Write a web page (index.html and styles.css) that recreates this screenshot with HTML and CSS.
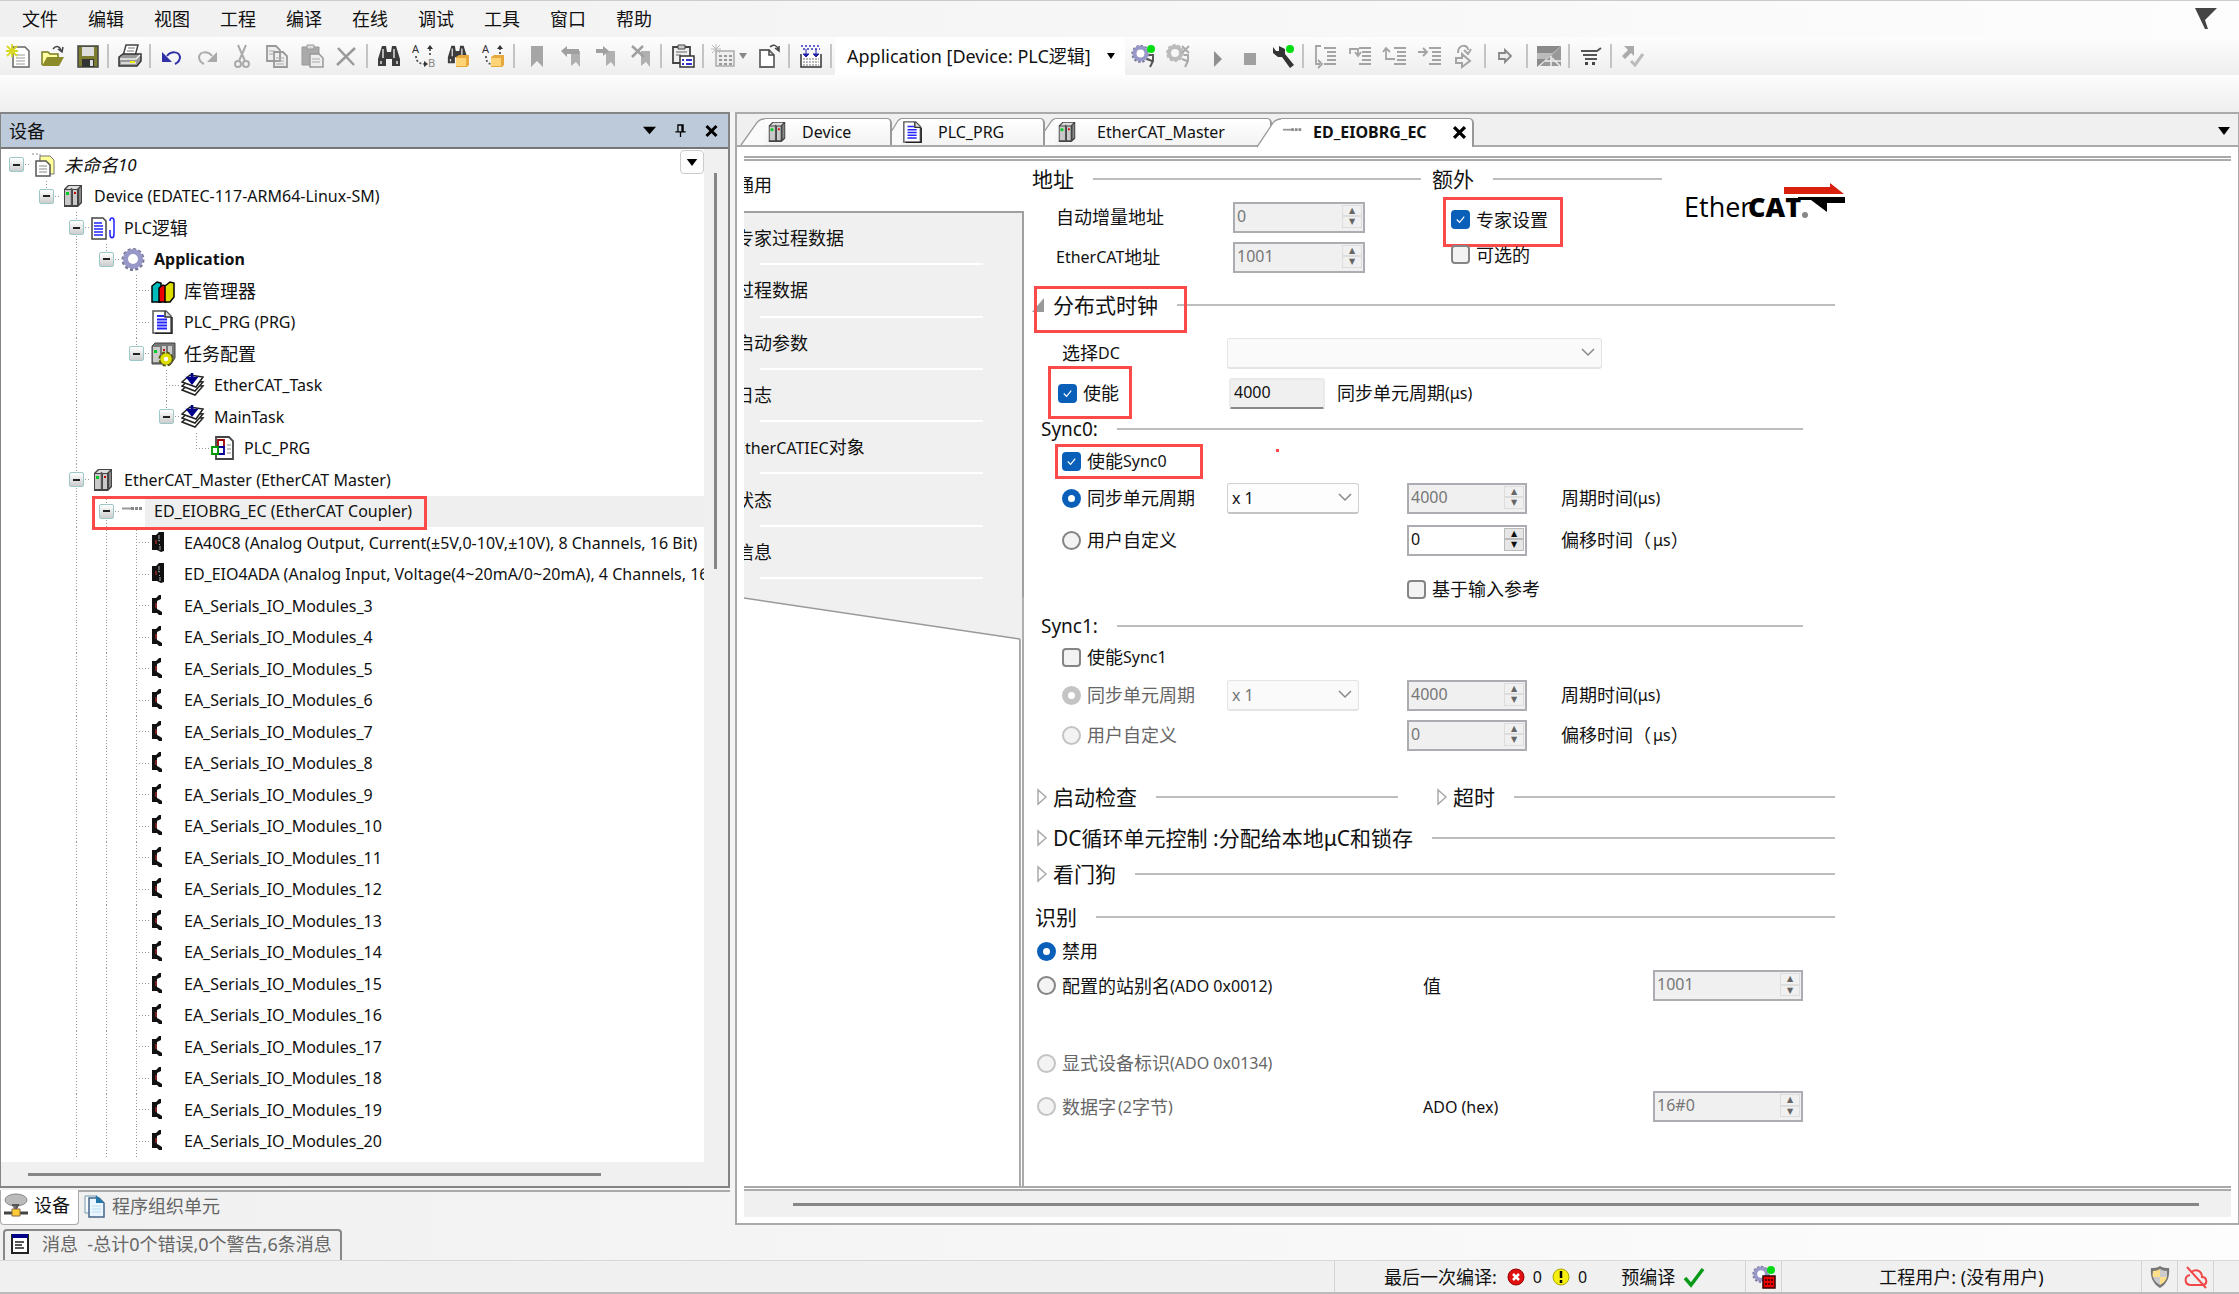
FILE: index.html
```html
<!DOCTYPE html>
<html lang="zh-CN">
<head>
<meta charset="utf-8">
<title>未命名10</title>
<link rel="stylesheet" href="styles.css">
</head>
<body>
<svg class="defs" aria-hidden="true">
  <symbol id="i-device" viewBox="0 0 24 24"><path d="M3 5l4-4h14v18l-4 4H3z" fill="#444"/><path d="M4 6h6v15H4zM12 6h4v15h-4z" fill="#c9c9c9"/><path d="M5 5l3-3h11l-3 3z" fill="#ddd"/><path d="M10.500 4v17" stroke="#555" stroke-width="1.500"/><path d="M18 5l2-2v15l-2 2z" fill="#888"/><path d="M5 8h3v3H5z" fill="#0c2"/><path d="M13 8h2v2h-2z" fill="#c00"/></symbol>
  <symbol id="i-doc" viewBox="0 0 24 24"><path d="M2 1h13l5 5v17H2z" fill="#fff" stroke="#555" stroke-width="1.500"/><path d="M14 1v6h6" fill="#ddd" stroke="#333" stroke-width="1.500"/><path d="M21 7v16.500H4" fill="none" stroke="#222" stroke-width="1.500"/><path d="M6 6h7M6 9.500h10M6 12.500h10M6 15.500h10M6 18.500h10" stroke="#22f" stroke-width="1.800"/></symbol>
  <symbol id="i-gear" viewBox="0 0 24 24"><circle cx="12" cy="12.500" r="10" fill="none" stroke="#777798" stroke-width="3" stroke-dasharray="3 2.200"/><circle cx="12" cy="12" r="7.500" fill="#fff" stroke="#9797c8" stroke-width="5"/></symbol>
  <symbol id="i-task" viewBox="0 0 24 24"><g fill="#fff" stroke="#222" stroke-width="1.500"><path d="M1 17l6-5 15 1-8 9z"/><path d="M1 13l6-5 15 1-8 9z"/><path d="M1 9l8-7 13 2-7 10z"/></g><path d="M11 0v9M7 5l4 5 4-5z" stroke="#00008b" stroke-width="2.500" fill="#00008b"/></symbol>
  <symbol id="i-mod" viewBox="0 0 24 24"><path d="M1 4h4l3-3 2 0v4L8 6 6 7v8l2 1 3 2v3H8l-2-2H1z" fill="#111"/><path d="M4.500 9h1v5h-1z" fill="#d33"/></symbol>
  <symbol id="i-amod" viewBox="0 0 24 24"><path d="M1 4h4l3-3h5v19l-3 1-4-2H1z" fill="#111"/><path d="M8 4v4M9 15v4M7 9l2 1M8 13l1 1" stroke="#aaa"/><path d="M4.500 9h1v4h-1z" fill="#d33"/></symbol>
  <symbol id="i-coupler" viewBox="0 0 24 24"><path fill="#fff" d="M0 0h24v20H0z"/><path d="M1 9.500h9" stroke="#999" stroke-width="2"/><path d="M10 9.500h12" stroke="#888" stroke-width="3" stroke-dasharray="3 1"/></symbol>
  <symbol id="i-binoc" viewBox="0 0 24 24"><path d="M5 2h4l1 6h4l1-6h4l4 13v7h-8v-7h-6v7H1v-7z" fill="#3c3c3c"/><path d="M6 5v9M17 5v9M4 17v3M20 17v3" stroke="#ddd" stroke-width="1.500"/></symbol>
  <symbol id="i-folder" viewBox="0 0 24 24"><path d="M9 13l3-2h10v10l-2 2H9z" fill="#e8a93c"/><path d="M9 14h10v8H9z" fill="#ffd477"/></symbol>
  <symbol id="i-mark" viewBox="0 0 24 24"><path d="M7 2h12v21l-6-6-6 6z" fill="#a6a6a6"/></symbol>
  <symbol id="i-flagmark" viewBox="0 0 24 24"><path d="M12 7h9v16l-4-5-5 4z" fill="#b0b0b0"/></symbol>
  <symbol id="i-lines" viewBox="0 0 24 24"><path d="M11 4h12M14 8h9M14 12h9M14 16h9M11 20h12" stroke="#a4a4a4" stroke-width="2"/></symbol>
</svg>

<header>
  <nav class="menu" aria-label="主菜单">
    <button>文件</button><button>编辑</button><button>视图</button><button>工程</button><button>编译</button><button>在线</button><button>调试</button><button>工具</button><button>窗口</button><button>帮助</button>
    <svg class="flag" viewBox="0 0 22 22"><path d="M0 0h22L10 12l3 9h-3z" fill="#444"/></svg>
  </nav>
  <div class="toolbar" role="toolbar">
    <button aria-label="新建"><svg viewBox="0 0 24 24"><path d="M7 3h12l4 4v16H7z" fill="#fff" stroke="#666" stroke-width="1.500"/><path d="M10 11h9M10 14h9M10 17h9M10 20h9" stroke="#999"/><path d="M6 0v13M0 7h12M1 2l10 10M11 2L1 12" stroke="#d8d820" stroke-width="1.800"/></svg></button>
    <button aria-label="打开"><svg viewBox="0 0 24 24"><path d="M1 21V8h6l2 2h8v4" fill="#ffffa0" stroke="#7a7a20" stroke-width="1.500"/><path d="M1 22l5-9h17l-5 9z" fill="#8b8b2a"/><path d="M12 5c3-4 7-3 8 2M17 5l4 3 1-5" fill="none" stroke="#444" stroke-width="1.500"/></svg></button>
    <button aria-label="保存"><svg viewBox="0 0 24 24"><path d="M2 2h20v21H2z" fill="#7c7c30" stroke="#444" stroke-width="1.500"/><path d="M6 3h12v9H6z" fill="#ddd"/><path d="M6 15h12v8H6z" fill="#333"/><path d="M14 16h3v6h-3z" fill="#ddd"/></svg></button>
    <i class="sep"></i>
    <button aria-label="打印"><svg viewBox="0 0 24 24"><path d="M8 1h12l-3 11H5z" fill="#fff" stroke="#444" stroke-width="1.500"/><path d="M10 4h7M9 7h7" stroke="#777"/><path d="M1 13l4-3h18v7l-4 5H1z" fill="#999" stroke="#333" stroke-width="1.500"/><path d="M2 15h16l4-4M3 19h15" stroke="#eee" stroke-width="1.500" fill="none"/><path d="M12 18h5" stroke="#ee0" stroke-width="2"/></svg></button>
    <i class="sep"></i>
    <button aria-label="撤销"><svg viewBox="0 0 24 24"><path d="M7 12c4-5 12-5 13 1 0 4-3 6-5 7" fill="none" stroke="#2f2fa8" stroke-width="2"/><path d="M2 8v10h10z" fill="#2f2fa8"/></svg></button>
    <button aria-label="重做"><svg viewBox="0 0 24 24"><path d="M17 12C13 7 5 7 4 13c0 4 3 6 5 7" fill="none" stroke="#aaa" stroke-width="2"/><path d="M22 8v10H12z" fill="#aaa"/></svg></button>
    <button aria-label="剪切"><svg viewBox="0 0 24 24"><path d="M8 1l7 16M16 1L9 17" stroke="#aaa" stroke-width="2"/><circle cx="8" cy="20" r="3" fill="none" stroke="#aaa" stroke-width="2"/><circle cx="16" cy="20" r="3" fill="none" stroke="#aaa" stroke-width="2"/></svg></button>
    <button aria-label="复制"><svg viewBox="0 0 24 24"><path d="M2 2h9l4 4v11H2zM9 8h9l4 4v11H9z" fill="#eee" stroke="#999" stroke-width="1.800"/><path d="M4 7h6M4 10h4M11 14h8M11 17h8M11 20h8" stroke="#aaa"/></svg></button>
    <button aria-label="粘贴"><svg viewBox="0 0 24 24"><path d="M2 3h17v18H2z" fill="#aaa" stroke="#999"/><path d="M7 1h7v4H7z" fill="#ddd" stroke="#999"/><path d="M10 10h9l4 4v9H10z" fill="#eee" stroke="#999" stroke-width="1.500"/><path d="M12 15h8M12 18h8" stroke="#aaa"/></svg></button>
    <button aria-label="删除"><svg viewBox="0 0 24 24"><path d="M3 4l16 17M20 4L2 21" stroke="#999" stroke-width="2.500"/></svg></button>
    <i class="sep"></i>
    <button aria-label="查找"><svg viewBox="0 0 24 24"><use href="#i-binoc"/></svg></button>
    <button aria-label="替换"><svg viewBox="0 0 24 24"><text x="0" y="9" font-size="11" fill="#333">A</text><text x="16" y="23" font-size="11" fill="#888">B</text><path d="M4 12c0 6 4 8 9 8M18 11V4" fill="none" stroke="#555" stroke-width="1.800" stroke-dasharray="2 2"/><path d="M12 17l4 3-4 3zM15 5l3-4 3 4z" fill="#333"/></svg></button>
    <button aria-label="在工程中查找"><svg viewBox="0 0 24 24"><use href="#i-binoc" width="21" height="21"/><use href="#i-folder"/></svg></button>
    <button aria-label="在工程中替换"><svg viewBox="0 0 24 24"><text x="0" y="9" font-size="11" fill="#333">A</text><path d="M4 12c0 5 2 8 5 8M18 10V4" fill="none" stroke="#555" stroke-width="1.800" stroke-dasharray="2 2"/><path d="M15 5l3-4 3 4z" fill="#333"/><use href="#i-folder"/></svg></button>
    <i class="sep"></i>
    <button aria-label="书签"><svg viewBox="0 0 24 24"><use href="#i-mark"/></svg></button>
    <button aria-label="上一个书签"><svg viewBox="0 0 24 24"><use href="#i-flagmark"/><path d="M2 7l6-5v3h12v5H8v3z" fill="#a0a0a0"/></svg></button>
    <button aria-label="下一个书签"><svg viewBox="0 0 24 24"><use href="#i-flagmark"/><path d="M15 7L9 2v3H2v4h7v3z" fill="#a0a0a0"/></svg></button>
    <button aria-label="清除书签"><svg viewBox="0 0 24 24"><use href="#i-flagmark"/><path d="M3 2l12 11M14 2L3 13" stroke="#a0a0a0" stroke-width="2.500"/></svg></button>
    <i class="sep"></i>
    <button aria-label="属性"><svg viewBox="0 0 24 24"><path d="M2 3h17v16H2z" fill="#eee" stroke="#444" stroke-width="1.800"/><path d="M7 1h7v4H7z" fill="#ccc" stroke="#444"/><path d="M5 8h11M5 11h5" stroke="#666"/><path d="M9 12h14v11H9z" fill="#fff" stroke="#333" stroke-width="1.500"/><path d="M11 16h2M11 20h2M15 16h6M15 20h6" stroke="#33c" stroke-width="1.800"/></svg></button>
    <i class="sep"></i>
    <button class="wide" aria-label="添加"><svg viewBox="0 0 24 24"><path d="M5 7h18v15H5z" fill="#eee" stroke="#aaa" stroke-width="1.500"/><path d="M8 12h13M8 16h13M8 20h13" stroke="#999" stroke-width="2" stroke-dasharray="3 2"/><path d="M5 0v11M0 5h10M1 1l8 8M9 1L1 9" stroke="#bbb"/></svg><svg class="caret" viewBox="0 0 8 6"><path d="M0 0h8L4 6z" fill="#888"/></svg></button>
    <button aria-label="跳转"><svg viewBox="0 0 24 24"><path d="M3 6h9l5 5v12H3z" fill="#fff" stroke="#666" stroke-width="1.800"/><path d="M12 6v5h5M13 3c3-3 7-2 8 2M18 4l4 3V2" fill="none" stroke="#444" stroke-width="1.500"/></svg></button>
    <i class="sep"></i>
    <button aria-label="编译"><svg viewBox="0 0 24 24"><path d="M2 10v13h20V10" fill="#fff" stroke="#333" stroke-width="1.500"/><path d="M4 15h16M4 18h16M4 21h16" stroke="#777" stroke-dasharray="2 1"/><path d="M2 2h20M4 5h17" stroke="#33b" stroke-width="1.500" stroke-dasharray="2 2"/><path d="M7 5v7M17 5v7M4 10l3 3 3-3zM14 10l3 3 3-3z" fill="#22a" stroke="#22a"/></svg></button>
    <i class="sep"></i>
    <button class="combo"><span>Application [Device: PLC逻辑]</span><svg class="caret" viewBox="0 0 8 6"><path d="M0 0h8L4 6z"/></svg></button>
    <button aria-label="登录"><svg viewBox="0 0 24 24"><use href="#i-gear" width="19" height="19"/><circle cx="20" cy="5" r="4" fill="#0d1"/><path d="M18 11h4v6l-3 6M16 15l5 2" stroke="#555" stroke-width="2" fill="none"/></svg></button>
    <button aria-label="退出"><svg viewBox="0 0 24 24"><circle cx="9" cy="9" r="8" fill="none" stroke="#bbb" stroke-width="2" stroke-dasharray="3 2"/><circle cx="9" cy="9" r="6" fill="none" stroke="#bbb" stroke-width="4"/><path d="M16 2l7 7M23 2l-7 7M18 11h4v6l-3 6M16 15l5 2" stroke="#aaa" stroke-width="2" fill="none"/></svg></button>
    <button aria-label="启动"><svg viewBox="0 0 24 24"><path d="M13 7l8 8-8 8z" fill="#909090"/></svg></button>
    <button aria-label="停止"><svg viewBox="0 0 24 24"><path d="M8 9h12v12H8z" fill="#a0a0a0"/></svg></button>
    <button aria-label="工具"><svg viewBox="0 0 24 24"><path d="M2 3v6l5 4h4l8 11 4-3-9-11V5L8 2v5H5z" fill="#333"/><circle cx="19" cy="5" r="4" fill="#0d1"/></svg></button>
    <i class="sep"></i>
    <button aria-label="跨过"><svg viewBox="0 0 24 24"><use href="#i-lines"/><path d="M8 2H3v18h4M5 16l4 4-4 4" fill="none" stroke="#a4a4a4" stroke-width="1.800"/></svg></button>
    <button aria-label="跳入"><svg viewBox="0 0 24 24"><use href="#i-lines"/><path d="M2 10V5h8v5M7 8l3 4 3-4" fill="none" stroke="#a4a4a4" stroke-width="1.800"/></svg></button>
    <button aria-label="跳出"><svg viewBox="0 0 24 24"><use href="#i-lines"/><path d="M12 15H3V5M0 8l3-4 4 4" fill="none" stroke="#a4a4a4" stroke-width="1.800"/></svg></button>
    <button aria-label="运行到光标"><svg viewBox="0 0 24 24"><use href="#i-lines"/><path d="M0 8h9M5 4l4 4-4 4" fill="none" stroke="#a4a4a4" stroke-width="1.800"/></svg></button>
    <button aria-label="设置下一语句"><svg viewBox="0 0 24 24"><path d="M5 9c0-9 10-9 10-3M11 6l4 4 3-5M3 14h6v-4l8 7-8 6v-4H3z" fill="none" stroke="#a4a4a4" stroke-width="2"/></svg></button>
    <i class="sep"></i>
    <button aria-label="下一语句"><svg viewBox="0 0 24 24"><path d="M4 9h6V6l6 6-6 6v-3H4z" fill="#eee" stroke="#888" stroke-width="1.800"/></svg></button>
    <i class="sep"></i>
    <button aria-label="语言"><svg viewBox="0 0 24 24"><path d="M0 2h24L0 23z" fill="#8a8a8a"/><path d="M0 9h16l-6 6H0z" fill="#bbb"/><path d="M24 2v20H3z" fill="#999"/><path d="M14 12v11M8 17h16M15 14l8 8" stroke="#eee" stroke-width="1.500"/></svg></button>
    <i class="sep"></i>
    <button aria-label="商店"><svg viewBox="0 0 24 24"><path d="M2 7h16l4-3M4 11h14M6 15h12" stroke="#555" stroke-width="2" fill="none"/><path d="M6 18h3v3H6zM13 18h3v3h-3z" fill="#444"/></svg></button>
    <i class="sep"></i>
    <button aria-label="检查"><svg viewBox="0 0 24 24"><path d="M3 2h10v10l-3-3-6 6-3-3 6-6z" fill="#aaa"/><path d="M10 17l4 4 8-11" stroke="#bbb" stroke-width="3" fill="none"/></svg></button>
  </div>
  <div class="spare"></div>
</header>

<main>
  <aside class="dock">
    <section class="panel">
      <div class="title"><h1>设备</h1>
        <button aria-label="菜单"><svg viewBox="0 0 12 8"><path d="M0 0h12L6 7z"/></svg></button>
        <button aria-label="固定"><svg viewBox="0 0 12 14"><path d="M3 0h6v8H3zM0 8h12M6 8v6" fill="none" stroke="#000" stroke-width="1.500"/><path d="M7 0h2v8H7z"/></svg></button>
        <button aria-label="关闭"><svg viewBox="0 0 12 12"><path d="M1 1l10 10M11 1L1 11" stroke="#000" stroke-width="3"/></svg></button>
      </div>
      <div class="treebox">
        <ul class="tree">
          <li><button class="x" aria-label="折叠"></button><svg viewBox="0 0 24 24"><path d="M1 1h8v8" fill="none" stroke="#888" stroke-dasharray="2 2"/><path d="M9 3h10l4 4v14H9z" fill="#ff9" stroke="#777"/><path d="M5 8h10l4 4v11H5z" fill="#fff" stroke="#555" stroke-width="1.500"/><path d="M8 13h8M8 16h8M8 19h8" stroke="#888"/></svg><em>未命名<small>10</small></em></li>
          <li><i></i><button class="x up" aria-label="折叠"></button><svg><use href="#i-device"/></svg><span>Device (EDATEC-117-ARM64-Linux-SM)</span></li>
          <li><i></i><i></i><button class="x up dn" aria-label="折叠"></button><svg viewBox="0 0 24 24"><path d="M1 2h11l3 3v18H1z" fill="#fff" stroke="#444" stroke-width="1.500"/><path d="M3 7h8M3 10h9M3 13h9M3 16h9M3 19h9" stroke="#22f" stroke-width="1.500"/><path d="M19 5c0-4 4-4 4 0v13c0 5-4 5-4 0v-4" fill="none" stroke="#22f" stroke-width="1.500"/></svg><span>PLC<b class="zh">逻辑</b></span></li>
          <li><i></i><i></i><i class="v"></i><button class="x up" aria-label="折叠"></button><svg><use href="#i-gear"/></svg><strong>Application</strong></li>
          <li><i></i><i></i><i class="v"></i><i></i><i class="v t"></i><svg viewBox="0 0 24 24"><path d="M1 7l5-4 4 1v19H1z" fill="#0bb" stroke="#000" stroke-width="1.500"/><path d="M8 9l4-3 3 1v16H8z" fill="#e00" stroke="#000" stroke-width="1.500"/><path d="M14 7l5-4 4 1v14l-4 5h-5z" fill="#dd0" stroke="#000" stroke-width="1.500"/></svg><span class="zh">库管理器</span></li>
          <li><i></i><i></i><i class="v"></i><i></i><i class="v t"></i><svg><use href="#i-doc"/></svg><span>PLC_PRG (PRG)</span></li>
          <li><i></i><i></i><i class="v"></i><i></i><button class="x up" aria-label="折叠"></button><svg viewBox="0 0 24 24"><path d="M1 4l3-3h20v15l-4 6H1z" fill="#777" stroke="#444"/><path d="M2 5h7v15H2zM11 4h4v8h-4zM17 4h4v8h-4z" fill="#ccc"/><path d="M3 8h3v3H3z" fill="#0c2"/><path d="M12 7h2v2h-2z" fill="#c00"/><circle cx="15" cy="17" r="6" fill="none" stroke="#550" stroke-width="3" stroke-dasharray="3 1.700"/><circle cx="15" cy="17" r="4" fill="#fff" stroke="#dd0" stroke-width="3.500"/></svg><span class="zh">任务配置</span></li>
          <li><i></i><i></i><i class="v"></i><i></i><i></i><i class="v t"></i><svg><use href="#i-task"/></svg><span>EtherCAT_Task</span></li>
          <li><i></i><i></i><i class="v"></i><i></i><i></i><button class="x up" aria-label="折叠"></button><svg><use href="#i-task"/></svg><span>MainTask</span></li>
          <li><i></i><i></i><i class="v"></i><i></i><i></i><i></i><i class="l"></i><svg viewBox="0 0 24 24"><path d="M5 1h13l4 4v18H5z" fill="#fff" stroke="#444" stroke-width="1.800"/><path d="M16 9h4M16 13h4M16 17h4" stroke="#888"/><path d="M7 4h6v7H7z" fill="#fff" stroke="#900" stroke-width="1.800"/><path d="M7 11h6v7H7z" fill="#fff" stroke="#009" stroke-width="1.800"/><path d="M1 11h6v7H1z" fill="#fff" stroke="#090" stroke-width="1.800"/></svg><span>PLC_PRG</span></li>
          <li><i></i><i></i><button class="x up dn" aria-label="折叠"></button><svg><use href="#i-device"/></svg><span>EtherCAT_Master (EtherCAT Master)</span></li>
          <li class="sel"><i></i><i></i><i class="v"></i><button class="x up dn" aria-label="折叠"></button><svg><use href="#i-coupler"/></svg><span>ED_EIOBRG_EC (EtherCAT Coupler)</span><mark></mark></li>
          <li><i></i><i></i><i class="v"></i><i class="v"></i><i class="v t"></i><svg><use href="#i-amod"/></svg><span>EA40C8 (Analog Output, Current(±5V,0-10V,±10V), 8 Channels, 16 Bit)</span></li>
          <li><i></i><i></i><i class="v"></i><i class="v"></i><i class="v t"></i><svg><use href="#i-amod"/></svg><span>ED_EIO4ADA (Analog Input, Voltage(4~20mA/0~20mA), 4 Channels, 16 Bit)</span></li>
          <li><i></i><i></i><i class="v"></i><i class="v"></i><i class="v t"></i><svg><use href="#i-mod"/></svg><span>EA_Serials_IO_Modules_3</span></li>
          <li><i></i><i></i><i class="v"></i><i class="v"></i><i class="v t"></i><svg><use href="#i-mod"/></svg><span>EA_Serials_IO_Modules_4</span></li>
          <li><i></i><i></i><i class="v"></i><i class="v"></i><i class="v t"></i><svg><use href="#i-mod"/></svg><span>EA_Serials_IO_Modules_5</span></li>
          <li><i></i><i></i><i class="v"></i><i class="v"></i><i class="v t"></i><svg><use href="#i-mod"/></svg><span>EA_Serials_IO_Modules_6</span></li>
          <li><i></i><i></i><i class="v"></i><i class="v"></i><i class="v t"></i><svg><use href="#i-mod"/></svg><span>EA_Serials_IO_Modules_7</span></li>
          <li><i></i><i></i><i class="v"></i><i class="v"></i><i class="v t"></i><svg><use href="#i-mod"/></svg><span>EA_Serials_IO_Modules_8</span></li>
          <li><i></i><i></i><i class="v"></i><i class="v"></i><i class="v t"></i><svg><use href="#i-mod"/></svg><span>EA_Serials_IO_Modules_9</span></li>
          <li><i></i><i></i><i class="v"></i><i class="v"></i><i class="v t"></i><svg><use href="#i-mod"/></svg><span>EA_Serials_IO_Modules_10</span></li>
          <li><i></i><i></i><i class="v"></i><i class="v"></i><i class="v t"></i><svg><use href="#i-mod"/></svg><span>EA_Serials_IO_Modules_11</span></li>
          <li><i></i><i></i><i class="v"></i><i class="v"></i><i class="v t"></i><svg><use href="#i-mod"/></svg><span>EA_Serials_IO_Modules_12</span></li>
          <li><i></i><i></i><i class="v"></i><i class="v"></i><i class="v t"></i><svg><use href="#i-mod"/></svg><span>EA_Serials_IO_Modules_13</span></li>
          <li><i></i><i></i><i class="v"></i><i class="v"></i><i class="v t"></i><svg><use href="#i-mod"/></svg><span>EA_Serials_IO_Modules_14</span></li>
          <li><i></i><i></i><i class="v"></i><i class="v"></i><i class="v t"></i><svg><use href="#i-mod"/></svg><span>EA_Serials_IO_Modules_15</span></li>
          <li><i></i><i></i><i class="v"></i><i class="v"></i><i class="v t"></i><svg><use href="#i-mod"/></svg><span>EA_Serials_IO_Modules_16</span></li>
          <li><i></i><i></i><i class="v"></i><i class="v"></i><i class="v t"></i><svg><use href="#i-mod"/></svg><span>EA_Serials_IO_Modules_17</span></li>
          <li><i></i><i></i><i class="v"></i><i class="v"></i><i class="v t"></i><svg><use href="#i-mod"/></svg><span>EA_Serials_IO_Modules_18</span></li>
          <li><i></i><i></i><i class="v"></i><i class="v"></i><i class="v t"></i><svg><use href="#i-mod"/></svg><span>EA_Serials_IO_Modules_19</span></li>
          <li><i></i><i></i><i class="v"></i><i class="v"></i><i class="v t"></i><svg><use href="#i-mod"/></svg><span>EA_Serials_IO_Modules_20</span></li>
        </ul>
        <button class="drop" aria-label="选项"><svg viewBox="0 0 12 8"><path d="M0 0h12L6 8z"/></svg></button>
        <div class="vbar"><div></div></div>
        <div class="hbar"><div></div></div>
      </div>
    </section>
    <div class="views">
      <button class="on"><svg viewBox="0 0 24 24"><ellipse cx="12" cy="7" rx="11" ry="6" fill="#bbb" stroke="#888"/><path d="M8 12l6 0-3 6" fill="#777" stroke="#555" stroke-width="2"/><path d="M0 20h24" stroke="#444" stroke-width="3"/><path d="M8 16h8v7H8z" fill="#fc3" stroke="#864"/></svg>设备</button>
      <button><svg viewBox="0 0 24 24"><path d="M3 2h11v17H3z" fill="#f4faff" stroke="#79a"/><path d="M7 4h10l5 5v14H7z" fill="#eaf6ff" stroke="#468" stroke-width="1.500"/><path d="M14 1l8 8h-8z" fill="#27a"/><path d="M10 12h9M10 15h9M10 18h9" stroke="#bde"/></svg>程序组织单元</button>
    </div>
  </aside>

  <section class="editor">
    <div class="tabs">
      <button class="wtab"><svg class="slant" viewBox="0 0 30 30" preserveAspectRatio="none"><path d="M0 30L20 5q4-4 10-4v29z" fill="#fafafa"/><path d="M0 30L20 5q4-4 10-4" fill="none" stroke="#999" stroke-width="1.500"/></svg><span><svg><use href="#i-device"/></svg>Device</span></button>
      <button class="ptab"><svg class="slant" viewBox="0 0 12 30" preserveAspectRatio="none"><path d="M0 14L8 3q2-2 4-2v29H0z" fill="#fafafa"/><path d="M0 14L8 3q2-2 4-2" fill="none" stroke="#999" stroke-width="1.500"/></svg><span><svg><use href="#i-doc"/></svg>PLC_PRG</span></button>
      <button class="mtab"><svg class="slant" viewBox="0 0 12 30" preserveAspectRatio="none"><path d="M0 14L8 3q2-2 4-2v29H0z" fill="#fafafa"/><path d="M0 14L8 3q2-2 4-2" fill="none" stroke="#999" stroke-width="1.500"/></svg><span><svg><use href="#i-device"/></svg>EtherCAT_Master</span></button>
      <button class="etab on"><svg class="slant" viewBox="0 0 30 30" preserveAspectRatio="none"><path d="M0 30L20 5q4-4 10-4v29z" fill="#fff"/><path d="M0 30L20 5q4-4 10-4" fill="none" stroke="#999" stroke-width="1.500"/></svg><span><svg><use href="#i-coupler"/></svg>ED_EIOBRG_EC<svg class="close" viewBox="0 0 12 12"><path d="M1 1l10 10M11 1L1 11" stroke="#000" stroke-width="3"/></svg></span></button>
      <button class="more" aria-label="更多"><svg viewBox="0 0 12 8"><path d="M0 0h12L6 8z"/></svg></button>
    </div>
    <div class="page">
      <div class="cols">
        <nav class="pages">
          <a class="on" href="#general">通用</a>
          <ul>
            <li><a href="#expert">专家过程数据</a></li>
            <li><a href="#process">过程数据</a></li>
            <li><a href="#startup">启动参数</a></li>
            <li><a href="#log">日志</a></li>
            <li><a href="#iec"><small>EtherCATIEC</small>对象</a></li>
            <li><a href="#state">状态</a></li>
            <li><a href="#info">信息</a></li>
          </ul>
          <svg class="diag" viewBox="0 0 280 42" preserveAspectRatio="none"><path d="M0 0h280v42h-4L0 1z" fill="#f0f0f0"/><path d="M0 1l276 41M279 0v42" fill="none" stroke="#999" stroke-width="1.500"/></svg>
          <div class="rest"></div>
        </nav>
        <form class="form">
          <div class="top">
            <section>
              <h2>地址</h2>
              <div class="row addr"><label for="f1" class="zh">自动增量地址</label><span class="spin"><input id="f1" value="0" disabled><span><button type="button" disabled>▲</button><button type="button" disabled>▼</button></span></span></div>
              <div class="row addr"><label for="f2">EtherCAT<b class="zh">地址</b></label><span class="spin"><input id="f2" value="1001" disabled><span><button type="button" disabled>▲</button><button type="button" disabled>▼</button></span></span></div>
            </section>
            <section>
              <h2>额外</h2>
              <div class="row extra"><label class="zh"><input type="checkbox" checked>专家设置</label><mark></mark></div>
              <div class="row extra"><label class="zh"><input type="checkbox">可选的</label></div>
            </section>
            <svg class="logo" viewBox="0 0 162 40"><text class="thin" x="0" y="34">Ether</text><text class="fat" x="64" y="34">CAT</text><path d="M100 4h46V0l14 11h-60z" fill="#d8200c"/><path d="M114 14h47v6h-18v9l-16-12h-13z"/><circle cx="121" cy="32" r="3" fill="#888"/></svg>
          </div>

          <h2 class="fold open"><button type="button" aria-label="折叠"><svg viewBox="0 0 12 14"><path d="M12 0v14H0z" fill="#999"/></svg></button>分布式时钟<mark></mark></h2>
          <div class="row sync"><label for="dc"><b class="zh">选择</b>DC</label><select id="dc" class="long" disabled><option></option></select></div>
          <div class="row sync enable"><label class="zh"><input type="checkbox" checked>使能</label><span class="unit"><input id="cyc" class="flat" value="4000" readonly><label for="cyc"><b class="zh">同步单元周期</b>(μs)</label></span><mark></mark></div>

          <h3>Sync0:</h3>
          <div class="row sync s0"><label><input type="checkbox" checked><b class="zh">使能</b>Sync0</label><mark></mark><i class="dot"></i></div>
          <div class="row sync tall"><label class="zh"><input type="radio" name="s0" checked>同步单元周期</label><select aria-label="倍数"><option>x 1</option></select><span class="spin"><input id="c0" value="4000" disabled><span><button type="button" disabled>▲</button><button type="button" disabled>▼</button></span></span><label for="c0"><b class="zh">周期时间</b>(μs)</label></div>
          <div class="row sync tall"><label class="zh"><input type="radio" name="s0">用户自定义</label><span></span><span class="spin"><input id="o0" value="0"><span><button type="button">▲</button><button type="button">▼</button></span></span><label for="o0"><b class="zh">偏移时间（</b>μs<b class="zh">）</b></label></div>
          <div class="row sync base"><span></span><span></span><label class="zh wide"><input type="checkbox">基于输入参考</label></div>

          <h3 class="second">Sync1:</h3>
          <div class="row sync s1"><label><input type="checkbox"><b class="zh">使能</b>Sync1</label></div>
          <div class="row sync"><label class="zh off"><input type="radio" name="s1" checked disabled>同步单元周期</label><select aria-label="倍数" disabled><option>x 1</option></select><span class="spin"><input id="c1" value="4000" disabled><span><button type="button" disabled>▲</button><button type="button" disabled>▼</button></span></span><label for="c1"><b class="zh">周期时间</b>(μs)</label></div>
          <div class="row sync"><label class="zh off"><input type="radio" name="s1" disabled>用户自定义</label><span></span><span class="spin"><input id="o1" value="0" disabled><span><button type="button" disabled>▲</button><button type="button" disabled>▼</button></span></span><label for="o1"><b class="zh">偏移时间（</b>μs<b class="zh">）</b></label></div>

          <div class="pair">
            <h2 class="fold"><button type="button" aria-label="展开"><svg viewBox="0 0 10 16"><path d="M1 1v14l8-7z" fill="none" stroke="#aaa" stroke-width="1.500"/></svg></button>启动检查</h2>
            <h2 class="fold"><button type="button" aria-label="展开"><svg viewBox="0 0 10 16"><path d="M1 1v14l8-7z" fill="none" stroke="#aaa" stroke-width="1.500"/></svg></button>超时</h2>
          </div>
          <h2 class="fold"><button type="button" aria-label="展开"><svg viewBox="0 0 10 16"><path d="M1 1v14l8-7z" fill="none" stroke="#aaa" stroke-width="1.500"/></svg></button>DC循环单元控制 :分配给本地μC和锁存</h2>
          <h2 class="fold low"><button type="button" aria-label="展开"><svg viewBox="0 0 10 16"><path d="M1 1v14l8-7z" fill="none" stroke="#aaa" stroke-width="1.500"/></svg></button>看门狗</h2>
          <h2 class="ident">识别</h2>
          <div class="row id short"><label class="zh"><input type="radio" name="id" checked>禁用</label></div>
          <div class="row id"><label><input type="radio" name="id"><b class="zh">配置的站别名</b>(ADO 0x0012)</label><label for="v1" class="zh">值</label><span class="spin"><input id="v1" value="1001" disabled><span><button type="button" disabled>▲</button><button type="button" disabled>▼</button></span></span></div>
          <div class="row id apart"><label class="off"><input type="radio" name="id" disabled><b class="zh">显式设备标识</b>(ADO 0x0134)</label></div>
          <div class="row id"><label class="off"><input type="radio" name="id" disabled><b class="zh">数据字</b>(2<b class="zh">字节</b>)</label><label for="v2">ADO (hex)</label><span class="spin"><input id="v2" value="16#0" disabled><span><button type="button" disabled>▲</button><button type="button" disabled>▼</button></span></span></div>
        </form>
      </div>
      <div class="pagebar"><div></div></div>
    </div>
  </section>
</main>

<div class="messages"><button><svg viewBox="0 0 18 20"><path d="M1 1h16v18H1z" fill="#fff" stroke="#222" stroke-width="2"/><path d="M1 2h16" stroke="#008" stroke-width="4"/><path d="M4 8h9M4 11h7M4 14h9" stroke="#222" stroke-width="1.500"/></svg>消息&nbsp; -总计0个错误,0个警告,6条消息</button></div>

<footer>
  <div class="build">最后一次编译:<svg viewBox="0 0 18 18"><circle cx="9" cy="9" r="8" fill="#e01010" stroke="#900"/><path d="M6 6l6 6M12 6l-6 6" stroke="#fff" stroke-width="2.500"/></svg><span>0</span><svg viewBox="0 0 18 18"><circle cx="9" cy="9" r="8" fill="#f5ee10" stroke="#aa0"/><path d="M9 3v7M9 12v3" stroke="#000" stroke-width="2.500"/></svg><span>0</span><span class="pre">预编译</span><svg class="ok" viewBox="0 0 22 20"><path d="M2 11l6 7L20 2" fill="none" stroke="#0a9a1a" stroke-width="3.500"/></svg></div>
  <div class="cell"><svg viewBox="0 0 24 24"><use href="#i-gear" width="18" height="18"/><circle cx="19" cy="5" r="4" fill="#0d1"/><path d="M11 11h12v12H11z" fill="#e00" stroke="#300" stroke-width="1.500"/><path d="M13 15h8M13 19h8" stroke="#300" stroke-width="1.500" stroke-dasharray="2 1"/></svg></div>
  <div class="user">工程用户: (没有用户)</div>
  <div class="cell"><svg viewBox="0 0 24 24"><path d="M12 1c3 2 6 2 9 2 1 9-2 16-9 20C5 19 2 12 3 3c3 0 6 0 9-2z" fill="#777"/><path d="M12 4v8H5c-1-2 0-4 0-6 3 0 5-1 7-2zM12 12h7c-1 3-3 6-7 8z" fill="#ffe08a"/><path d="M12 4c2 1 4 2 7 2v6h-7zM5 12h7v8c-4-2-6-5-7-8z" fill="#ccc"/></svg></div>
  <div class="cell"><svg viewBox="0 0 24 24"><path d="M7 20h12c5-1 4-8-1-8 0-7-8-9-11-4M6 10c-6 1-6 10 1 10M3 2l19 21" fill="none" stroke="#f04848" stroke-width="2"/></svg></div>
  <div class="end"></div>
</footer>
</body>
</html>
```
FILE: styles.css
```css
* { box-sizing: border-box; }
body {
  margin: 0; min-height: 100vh; display: flex; flex-direction: column;
  font: 16px/22px "Noto Sans", "Noto Sans CJK SC", sans-serif; color: #111;
  background: linear-gradient(90deg, #f0f0f0, #fdfdfd);
}
button { font: inherit; color: inherit; background: none; border: 0; padding: 0; margin: 0; }
ul { list-style: none; margin: 0; padding: 0; }
h1, h2, h3 { margin: 0; font-weight: 400; }
svg { display: block; flex: none; width: 24px; height: 24px; overflow: visible; }
mark { position: absolute; background: none; border: 3px solid #fb4a4a; pointer-events: none; }
.defs { position: absolute; width: 0; height: 0; }
.zh { font-size: 18px; font-weight: 400; }

/* menu and toolbar */
.menu { display: flex; align-items: center; gap: 30px; height: 37px; padding: 0 22px; border-top: 1px solid #ccc; font-size: 18px; }
.flag { width: 22px; height: 22px; margin-left: auto; }
.toolbar { display: flex; align-items: center; height: 38px; background: linear-gradient(#fdfdfd, #eee); font-size: 18px; }
.toolbar button { flex: none; width: 35px; height: 36px; display: flex; justify-content: center; align-items: center; padding-bottom: 1px; }
.toolbar .wide { width: 44px; gap: 4px; }
.toolbar .combo { width: 290px; height: 38px; padding: 0 6px 0 12px; justify-content: space-between; background: #fff; white-space: nowrap; }
.caret { width: 8px; height: 6px; }
.combo .caret { margin-right: 4px; }
.sep { flex: none; width: 2px; height: 24px; margin: 0 3px 0 2px; background: #c4c4c4; }
.spare { height: 37px; background: linear-gradient(#fdfdfd, #eee); }

main { flex: 1; display: flex; gap: 5px; }

/* device panel */
.dock { flex: 0 0 730px; min-width: 0; display: flex; flex-direction: column; }
.panel { flex: 1; display: flex; flex-direction: column; border: 2px solid #848484; border-left-width: 1px; }
.title { display: flex; align-items: center; gap: 18px; height: 35px; padding: 0 10px 0 8px; background: #bccad9; border-bottom: 2px solid #777; }
.title h1 { flex: 1; font-size: 18px; }
.title svg { width: 13px; height: 12px; }
.treebox { flex: 1; position: relative; display: grid; grid-template: 1fr 24px / minmax(0, 1fr) 24px; background: #f0f0f0; }
.tree { display: grid; grid-auto-rows: minmax(31px, 1fr); padding-bottom: 5px; background: #fff; overflow: hidden; }
.tree li { position: relative; display: flex; align-items: stretch; white-space: nowrap; min-width: 0; }
.tree li > svg { align-self: center; }
.tree span, .tree strong, .tree em { flex: 1; display: flex; align-items: center; padding-left: 9px; }
.tree em { font-size: 18px; }
.tree small { font-size: 17px; }
.tree i, .tree .x {
  flex: none; width: 30px;
  --dots: repeating-linear-gradient(#999 0 1px, transparent 1px 3px);
  --dash: repeating-linear-gradient(90deg, #999 0 1px, transparent 1px 3px);
}
.tree .v { background: var(--dots) 15px 0 / 1px 100% no-repeat; }
.tree .t { background: var(--dots) 15px 0 / 1px 100% no-repeat, var(--dash) 15px 50% / 15px 1px no-repeat; }
.tree .l { background: var(--dots) 15px 0 / 1px 50% no-repeat, var(--dash) 15px 50% / 15px 1px no-repeat; }
.tree .x { display: flex; justify-content: center; align-items: center; background: var(--dash) 15px 50% / 15px 1px no-repeat; }
.tree .x.up { background: var(--dots) 15px 0 / 1px 50% no-repeat, var(--dash) 15px 50% / 15px 1px no-repeat; }
.tree .x.up.dn { background: var(--dots) 15px 0 / 1px 100% no-repeat, var(--dash) 15px 50% / 15px 1px no-repeat; }
.tree .x::before { content: ""; width: 13px; height: 13px; border: 1px solid #9cc8c8; border-radius: 2px; background: linear-gradient(#222, #222) 50% 50% / 7px 2px no-repeat, linear-gradient(#fff, #ccc); }
.sel span { background: #efefef; }
.sel mark { left: 91px; top: 0; width: 335px; height: 34px; z-index: 1; }
.drop { position: absolute; right: 24px; top: 1px; width: 24px; height: 24px; display: flex; align-items: center; justify-content: center; border: 1px solid #ccc; border-radius: 4px; background: #fcfcfc; }
.drop svg { width: 12px; height: 7px; }
.vbar { padding: 24px 11px 0 10px; }
.vbar div { height: 40%; background: #868686; }
.hbar { grid-column: 1 / 3; padding: 11px 127px 0 27px; }
.hbar div { height: 3px; background: #868686; }
.views { display: flex; height: 37px; padding-top: 2px; font-size: 18px; color: #666; }
.views button { display: flex; align-items: center; gap: 6px; padding: 0 8px 5px 3px; border-top: 2px solid #aaa; }
.views button:last-child { flex: 1; }
.views .on { background: #fff; color: #111; border: 1px solid #aaa; border-top: 0; border-radius: 0 0 4px 4px; }

/* editor */
.editor { flex: 1; min-width: 0; display: flex; flex-direction: column; border: 2px solid #aaa; border-right-width: 1px; background: #fff; }
.tabs { display: flex; align-items: flex-end; height: 33px; padding-left: 4px; background: #f0f0f0; border-bottom: 2px solid #aaa; }
.tabs button { display: flex; flex: none; height: 27px; }
.tabs .slant { width: 24px; height: 27px; }
.tabs span { flex: 1; display: flex; align-items: center; border: 1px solid #999; border-width: 1px 2px 0 0; border-top-right-radius: 5px; background: linear-gradient(#fff, #f3f3f3); }
.tabs span svg:first-child { margin-right: 13px; height: 22px; }
.wtab { width: 151px; }
.ptab { width: 153px; }
.mtab { width: 227px; }
.ptab .slant { width: 9px; }
.mtab .slant { width: 10px; }
.tabs .mtab span svg { margin-right: 18px; }
.etab { width: 217px; margin-left: -15px; font-weight: 700; }
.tabs .etab { height: 29px; margin-bottom: -2px; }
.tabs .etab span { background: #fff; padding: 0 6px 2px 0; }
.tabs .etab span svg:first-child { margin-right: 8px; }
.tabs .etab .slant { height: 29px; }
.tabs .close { width: 13px; height: 13px; margin-left: auto; }
.tabs .more { margin: 0 8px 10px auto; width: 12px; height: 8px; }
.more svg { width: 12px; height: 8px; }
.page { flex: 1; display: flex; flex-direction: column; margin: 9px 7px 6px 7px; border-top: 5px double #aaa; }
.cols { flex: 1; display: flex; border-bottom: 5px double #aaa; }
.pagebar { height: 26px; padding: 12px 32px 0 49px; background: #f0f0f0; }
.pagebar div { height: 3px; background: #868686; }

.pages { flex: 0 0 280px; display: flex; flex-direction: column; overflow: hidden; font-size: 18px; }
.pages a { color: #111; text-decoration: none; white-space: nowrap; margin-left: -8px; }
.pages small { font-size: 16px; }
.pages .on { height: 50px; padding-bottom: 3px; display: flex; align-items: center; }
.pages ul { height: 386px; padding-bottom: 18px; display: grid; grid-auto-rows: 1fr; background: #f0f0f0; border: 2px solid #a0a0a0; border-width: 2px 2px 0 0; }
.pages li { display: flex; align-items: center; padding-bottom: 2px; background: linear-gradient(#fff, #fff) 16px 100% / 223px 2px no-repeat; }
.diag { width: 100%; height: 42px; }
.rest { flex: 1; border-right: 5px double #aaa; }

/* form */
.form { flex: 1; max-width: 811px; }
h2, h3 { display: flex; align-items: center; gap: 19px; height: 36px; padding-left: 8px; font-size: 21px; }
h2::after, h3::after { content: ""; flex: 1; height: 2px; background: #bdbdbd; }
h3 { height: 32px; padding: 0 32px 0 17px; font-size: 19px; }
h3.second { height: 26px; }
.fold { position: relative; height: 42px; padding-left: 13px; }
.fold button { width: 16px; margin-right: -19px; }
.fold button svg { width: 10px; height: 16px; }
.fold.open { height: 56px; padding-left: 8px; }
.fold.open button { width: 21px; }
.fold.open button svg { width: 12px; height: 14px; }
.open mark { left: 10px; top: 9px; width: 153px; height: 47px; }
.fold.low { height: 30px; }
.ident { height: 44px; margin-top: 6px; padding-left: 11px; }
.pair { display: grid; grid-template-columns: 374px 1fr; column-gap: 26px; margin-top: 22px; }
.pair h2 { height: 40px; }
.top { display: grid; grid-template-columns: 397px 241px 1fr; }
.top section + section h2 { padding-left: 11px; margin-bottom: 5px; }
.logo { width: 162px; height: 40px; margin: 22px 0 0 22px; font: 27px "Open Sans", sans-serif; }
.logo .fat { font-weight: 800; }
.row { position: relative; display: grid; align-items: center; height: 40px; }
.row label { display: flex; align-items: center; white-space: nowrap; }
.row label input { margin: 0 6px 0 0; }
.row b:not(:last-child) { margin-right: 2px; }
.off { color: #666; }
.addr { grid-template-columns: 177px 132px; padding-left: 32px; }
.extra { padding-left: 30px; height: 35px; }
.extra mark { left: 22px; top: -5px; width: 120px; height: 50px; }
.sync { grid-template-columns: 165px 180px 154px 1fr; padding-left: 38px; }
.sync select { width: 132px; }
.sync select.long { width: 375px; }
.sync .spin { width: 120px; }
.enable { padding-left: 34px; grid-template-columns: 171px 1fr; }
.enable mark { left: 24px; top: -7px; width: 84px; height: 53px; }
.unit { display: flex; gap: 12px; }
.s0 { height: 32px; }
.s0 mark { left: 31px; top: -1px; width: 148px; height: 35px; }
.dot { position: absolute; left: 252px; top: 4px; width: 3px; height: 3px; background: #fb4a4a; }
.s1 { height: 36px; }
.tall { height: 42px; }
.base { height: 48px; margin-top: 4px; }
.id { grid-template-columns: 386px 230px 150px; padding-left: 13px; height: 45px; }
.short { height: 24px; }
.apart { margin-top: 34px; height: 42px; }

input, select { font: inherit; color: #111; }
input[type="checkbox"], input[type="radio"] { appearance: none; flex: none; width: 19px; height: 19px; border: 2px solid #858585; border-radius: 4px; background: #f3f3f3; }
input[type="radio"] { border-radius: 50%; }
input[type="checkbox"]:checked { border-color: #0a5fb8; background: #0a5fb8 url("data:image/svg+xml,%3Csvg xmlns='http://www.w3.org/2000/svg' viewBox='0 0 16 16'%3E%3Cpath d='M4 8l3 3 5-6' fill='none' stroke='%23fff' stroke-width='1.300'/%3E%3C/svg%3E") center / 15px no-repeat; }
input[type="radio"]:checked { border: 6px solid #0a5fb8; background: #fff; }
input[type="radio"]:disabled { border-color: #c4c4c4; }
.spin { display: flex; height: 31px; border: 2px solid #abadb3; background: #fff; }
.spin:has(input:disabled) { background: #f0f0f0; }
.spin input { flex: 1; min-width: 0; border: 0; padding: 0 0 3px 2px; background: none; }
.spin input:disabled { color: #777; }
.spin > span { display: grid; grid-template-rows: 1fr 1fr; width: 21px; padding: 1px 1px 3px 0; }
.spin button { font: 8px/10px "DejaVu Sans", sans-serif; color: #111; background: #e6e6e6; border: 1px solid #bbb; overflow: hidden; }
.spin button:disabled { color: #666; background: #f0f0f0; border-color: #ddd; }
.flat { width: 96px; height: 31px; padding: 0 0 2px 3px; border: 2px solid #eaeaea; border-bottom-color: #888; border-radius: 3px; background: #f0f0f0; }
select { appearance: none; height: 31px; padding: 0 4px; border: 1px solid #d0d0d0; border-bottom: 2px solid #c4c4c4; border-radius: 3px; background: #fdfdfd url("data:image/svg+xml,%3Csvg xmlns='http://www.w3.org/2000/svg' viewBox='0 0 14 9'%3E%3Cpath d='M1 1l6 6 6-6' fill='none' stroke='%23888' stroke-width='1.500'/%3E%3C/svg%3E") right 6px center / 14px 9px no-repeat; }
select:disabled { color: #777; opacity: 1; border-color: #e4e4e4; background-color: #fafafa; }

/* messages and status */
.messages { height: 35px; padding: 4px 0 0 3px; }
.messages button { display: flex; align-items: center; gap: 13px; height: 31px; padding: 0 8px 4px 6px; border: 2px solid #888; border-bottom: 0; border-radius: 4px 4px 0 0; font-size: 18px; color: #666; background: #f0f0f0; }
.messages svg { width: 18px; height: 20px; }
footer { display: flex; justify-content: flex-end; height: 34px; background: #f0f0f0; border-top: 1px solid #d8d8d8; border-bottom: 2px solid #bbb; font-size: 18px; }
footer > div { display: flex; align-items: center; justify-content: center; border-left: 1px solid #d4d4d4; }
footer .build { width: 411px; justify-content: flex-start; padding-left: 49px; }
.build svg { width: 18px; height: 18px; margin-left: 10px; }
.build span { margin-left: 8px; font-size: 16px; }
.build .pre { margin-left: 34px; font-size: 18px; }
.build .ok { width: 22px; height: 20px; margin-left: 8px; }
.cell { width: 36px; }
footer .user { width: 360px; }
.end { width: 26px; }
```
